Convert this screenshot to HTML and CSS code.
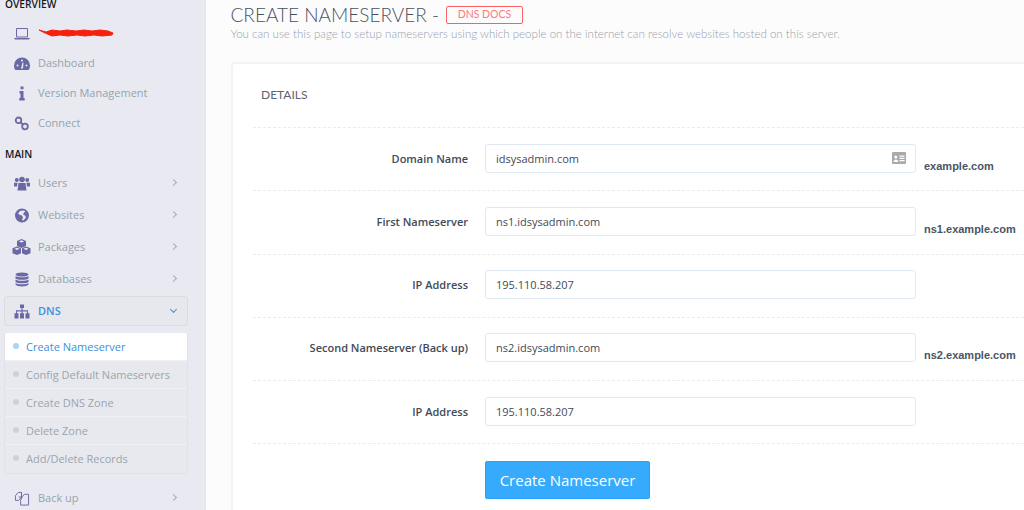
FILE: index.html
```html
<!DOCTYPE html>
<html lang="en">
<head>
<meta charset="utf-8">
<title>Create Nameserver</title>
<link rel="stylesheet" href="styles.css">
</head>
<body>
<div class="app">
  <aside class="sidebar">
    <div class="heading heading-top">OVERVIEW</div>
    <ul class="nav nav-compact">
      <li class="item">
        <svg class="icon" viewBox="0 0 16 14"><path d="M2.500 2h11v8.500h-11z" fill="none" stroke="currentColor" stroke-width="1"/><path d="M0 11.500h16l-1 1.500H1z" fill="currentColor"/></svg>
        <svg class="scribble" viewBox="0 0 76 10"><path d="M1 3l7 2 6-2 8 1 7-1 9 1 8-1 8 1 8-1 8 1 5 2-1 2-10 1-8-1-9 1-8-1-9 1-8-1-8 1-7-3z" fill="#f5200f" stroke="#f5200f" stroke-width="1"/></svg>
      </li>
      <li class="item">
        <svg class="icon" viewBox="0 0 16 14"><path fill="currentColor" fill-rule="evenodd" d="M8 1a8 8 0 0 1 8 8c0 2-.6 3.500-1.500 4.500h-13C.6 12.500 0 11 0 9a8 8 0 0 1 8-8zM8 3a1 1 0 1 0 0 2 1 1 0 0 0 0-2zM3.500 8a1 1 0 1 0 0 2 1 1 0 0 0 0-2zM12.500 8a1 1 0 1 0 0 2 1 1 0 0 0 0-2zM7 12h2l.5-6h-1z"/></svg>
        <span>Dashboard</span>
      </li>
      <li class="item">
        <svg class="icon" viewBox="0 0 16 14"><path fill="currentColor" d="M6.500 0h3v2.800h-3zM5.500 4.500h4v7h1.200V14H5.300v-2.500h1.200V7H5.500z"/></svg>
        <span>Version Management</span>
      </li>
      <li class="item">
        <svg class="icon" viewBox="0 0 16 14"><g fill="none" stroke="currentColor" stroke-width="1.800"><circle cx="4.500" cy="3.800" r="2.800"/><circle cx="11" cy="10" r="2.800"/><path d="M6.500 6l2.500 2"/></g></svg>
        <span>Connect</span>
      </li>
    </ul>
    <div class="divider"></div>
    <div class="heading">MAIN</div>
    <ul class="nav">
      <li class="item">
        <svg class="icon" viewBox="0 0 16 14"><g fill="currentColor"><circle cx="2.800" cy="3.500" r="2"/><circle cx="13.200" cy="3.500" r="2"/><circle cx="8" cy="3" r="2.800"/><path d="M0 6.200h3.600L3 10H0zM12.400 6.200H16V10h-3zM4.500 6.500h7l1 7.500h-9z"/></g></svg>
        <span>Users</span><span class="chevron"></span>
      </li>
      <li class="item">
        <svg class="icon" viewBox="0 0 16 14"><path fill="currentColor" fill-rule="evenodd" d="M8 0a7 7 0 1 1 0 14A7 7 0 0 1 8 0zM6 2.500L4 5l2 1.500 2 .5 1 2-1 2.500 1.500.5L12 9l-1-2-2-1 1-2 1.500-1.500L9 2z"/></svg>
        <span>Websites</span><span class="chevron"></span>
      </li>
      <li class="item">
        <svg class="icon icon-wide" viewBox="0 0 19 16"><g fill="currentColor"><path d="M9.500 0L14 2v5L9.500 9 5 7V2zM9.500 1.200L6.800 2.400l2.700 1.200 2.700-1.200z" fill-rule="evenodd"/><path d="M5 7.500L9 9.300v4.900L5 16 .5 14.200V9.300zM5 8.700L2.400 9.800 5 11l2.600-1.200z" fill-rule="evenodd"/><path d="M14 7.500l4.500 1.800v4.900L14 16l-4-1.800V9.300zM14 8.700l-2.600 1.100L14 11l2.600-1.200z" fill-rule="evenodd"/></g></svg>
        <span>Packages</span><span class="chevron"></span>
      </li>
      <li class="item">
        <svg class="icon" viewBox="0 0 16 14"><g fill="currentColor"><ellipse cx="8" cy="2" rx="6.500" ry="2"/><path d="M1.500 3.500C3 5.200 13 5.200 14.500 3.500V6C13 7.700 3 7.700 1.500 6zM1.500 7C3 8.700 13 8.700 14.500 7v2.500C13 11.200 3 11.200 1.500 9.500zM1.500 10.500c1.500 1.700 11.500 1.700 13 0V12c-1.500 2.600-11.500 2.600-13 0z"/></g></svg>
        <span>Databases</span><span class="chevron"></span>
      </li>
      <li class="item item-open">
        <svg class="icon" viewBox="0 0 16 14"><path fill="currentColor" d="M6 0h4v3.500H8.600v2.300h5.400v3h1.500V14h-4V8.800h1.500V7H8.600v1.800H10V14H6V8.800h1.400V7H3v1.800h1.500V14h-4V8.800H2v-3h5.400V3.500H6z"/></svg>
        <span>DNS</span><span class="chevron chevron-down"></span>
      </li>
    </ul>
    <ul class="subnav">
      <li class="subitem subitem-active">Create Nameserver</li>
      <li class="subitem">Config Default Nameservers</li>
      <li class="subitem">Create DNS Zone</li>
      <li class="subitem">Delete Zone</li>
      <li class="subitem">Add/Delete Records</li>
    </ul>
    <ul class="nav nav-last">
      <li class="item">
        <svg class="icon" viewBox="0 0 16 16"><g fill="none" stroke="currentColor" stroke-width="1"><path d="M1 5l3-3.500h3.500v5L4.500 10H1zM8.500 6l2-2.500H15V15H6.500v-5z"/><path d="M7.500 1.500v5h-3"/></g></svg>
        <span>Back up</span><span class="chevron"></span>
      </li>
    </ul>
  </aside>
  <main class="main">
    <div class="title-row">
      <h1 class="title">CREATE NAMESERVER -</h1>
      <span class="badge">DNS DOCS</span>
    </div>
    <p class="subtitle">You can use this page to setup nameservers using which people on the internet can resolve websites hosted on this server.</p>
    <section class="card">
      <h2 class="card-title">DETAILS</h2>
      <div class="row">
        <label class="label">Domain Name</label>
        <div class="field">idsysadmin.com
          <svg class="field-icon" viewBox="0 0 14 12"><path fill="#a9abab" fill-rule="evenodd" d="M1 0h12a1 1 0 0 1 1 1v10a1 1 0 0 1-1 1H1a1 1 0 0 1-1-1V1a1 1 0 0 1 1-1zM3.800 3.500a1.500 1.500 0 1 0 0 3 1.500 1.500 0 0 0 0-3zM1.500 10h4.800c0-3.500-4.800-3.500-4.800 0zM7.500 3.500v1.200h5V3.500zM7.500 5.700v1.200h5V5.700zM7.500 8v1.200h5V8z"/></svg>
        </div>
        <span class="hint">example.com</span>
      </div>
      <div class="row">
        <label class="label">First Nameserver</label>
        <div class="field">ns1.idsysadmin.com</div>
        <span class="hint">ns1.example.com</span>
      </div>
      <div class="row">
        <label class="label">IP Address</label>
        <div class="field">195.110.58.207</div>
      </div>
      <div class="row">
        <label class="label">Second Nameserver (Back up)</label>
        <div class="field">ns2.idsysadmin.com</div>
        <span class="hint">ns2.example.com</span>
      </div>
      <div class="row">
        <label class="label">IP Address</label>
        <div class="field">195.110.58.207</div>
      </div>
      <div class="actions">
        <button class="button" type="button">Create Nameserver</button>
      </div>
    </section>
  </main>
</div>
</body>
</html>
```
FILE: styles.css
```css
* { box-sizing: border-box; }
html, body { margin: 0; height: 510px; overflow: hidden; background: #fcfcfd; }
ul { list-style: none; margin: 0; padding: 0; }

.app { display: flex; height: 510px; overflow: hidden; }

.sidebar {
  width: 206px;
  flex: none;
  height: 510px;
  overflow: hidden;
  background: #e9eaf1;
  border-right: 1px solid #e4e5ec;
  padding: 0 17px 0 4px;
  font-family: "Open Sans", sans-serif;
  font-size: 11px;
  color: #94a3ad;
}
.heading {
  height: 16px;
  line-height: 16px;
  padding-left: 1px;
  font-size: 10.200px;
  font-weight: 600;
  color: #15181d;
}
.heading-top { height: 9px; line-height: 9px; margin-bottom: 9px; }
.divider { height: 1px; background: #e2e8f1; margin: 1px 0 5px; }

.item {
  display: flex;
  align-items: center;
  height: 30px;
  padding-left: 9px;
  border: 1px solid transparent;
  border-radius: 3px;
}
.item span { position: relative; top: -0.500px; }
.nav-compact .item { height: 30px; }
.nav-compact { margin-bottom: 2px; }
.nav:not(.nav-compact) .item { height: 32px; }
.nav:not(.nav-compact) { margin-top: 5px; }
.item-open { background: #e6e8ee; border-color: #d9dde3 !important; color: #3d8fe0; font-weight: 600; height: 30px !important; margin-top: 1px; }
.nav-last { margin-top: 8px !important; }

.icon { width: 16px; height: 15px; margin-right: 8px; flex: none; color: #6b68a6; }
.icon-wide { width: 19px; height: 16px; margin-left: -2px; margin-right: 7px; }
.scribble { width: 76px; height: 10px; margin-top: -3px; }

.chevron {
  width: 5px;
  height: 5px;
  margin-left: auto;
  margin-right: 11px;
  border-top: 1px solid #a2aeb6;
  border-right: 1px solid #a2aeb6;
  transform: rotate(45deg);
}
.chevron-down {
  border-color: #3d8fe0;
  transform: rotate(135deg);
  margin-top: -2px;
}

.subnav {
  margin-top: 7px;
  background: #e8e9ef;
  border: 1px solid #e1e3e9;
  border-top: 0;
  border-radius: 3px;
  overflow: hidden;
}
.subitem {
  position: relative;
  height: 28px;
  line-height: 27px;
  padding-left: 21px;
  border-bottom: 1px solid #f0f1f5;
  color: #9aa5ad;
  white-space: nowrap;
}
.subitem:last-child { border-bottom: 0; }
.subitem::before {
  content: "";
  position: absolute;
  left: 8px;
  top: 10px;
  width: 6px;
  height: 6px;
  border-radius: 50%;
  background: #ccd2d9;
}
.subitem-active { background: #fff; color: #3d8fe0; }
.subitem-active::before { background: #a9d4f5; }

.main {
  flex: 1;
  min-width: 0;
  overflow: hidden;
  padding-left: 25px;
  font-family: "Open Sans", sans-serif;
}
.title-row { display: flex; align-items: center; height: 25px; padding-top: 4px; gap: 7px; }
.title {
  margin: 0 0 0 -0.500px;
  font-family: Lato, sans-serif;
  font-weight: 300;
  font-size: 19px;
  line-height: 22px;
  color: #48525f;
  white-space: nowrap;
}
.badge {
  height: 18px;
  width: 77px;
  line-height: 15px;
  text-align: center;
  border: 1.500px solid #fb6064;
  border-radius: 2px;
  color: #fb7a7d;
  font-family: Lato, sans-serif;
  font-weight: 400;
  font-size: 10.500px;
  white-space: nowrap;
}
.subtitle {
  margin: 2px 0 0 -0.500px;
  height: 14px;
  line-height: 14px;
  font-family: Lato, sans-serif;
  font-weight: 300;
  font-size: 11.550px;
  color: #98a1ab;
  white-space: nowrap;
}
.card {
  width: 850px;
  height: 480px;
  margin-top: 21px;
  padding: 0 0 0 20px;
  background: #fff;
  border: 2px solid #f0f4f8;
  border-radius: 4px;
}
.card-title {
  margin: 0;
  height: 64px;
  line-height: 61px;
  padding-left: 8px;
  font-family: Lato, sans-serif;
  font-weight: 400;
  font-size: 12px;
  color: #5a6470;
  border-bottom: 1px dashed #e9ebee;
}
.row {
  display: flex;
  align-items: center;
  height: 63.250px;
  padding-bottom: 2px;
  border-bottom: 1px dashed #e9ebee;
  white-space: nowrap;
}
.label {
  width: 215px;
  flex: none;
  text-align: right;
  font-size: 11px;
  font-weight: 600;
  color: #3f4a57;
}
.field {
  position: relative;
  width: 431px;
  height: 29px;
  margin-left: 17px;
  padding-left: 10px;
  line-height: 27px;
  flex: none;
  font-size: 11px;
  color: #3f4a57;
  border: 1px solid #dfe9f3;
  border-radius: 3px;
  background: #fff;
}
.field-icon { position: absolute; right: 9px; top: 7px; width: 14px; height: 12px; }
.hint {
  margin: 15px 0 0 8px;
  font-family: "Liberation Sans", sans-serif;
  font-weight: 700;
  font-size: 11px;
  color: #4a5563;
}
.actions { padding: 17px 0 0 232px; }
.button {
  display: block;
  width: 165px;
  height: 38px;
  padding: 0;
  border: 1px solid #2ba1f3;
  border-radius: 2px;
  background: #36aafd;
  color: #fff;
  font-family: "Open Sans", sans-serif;
  font-size: 15px;
}
```
